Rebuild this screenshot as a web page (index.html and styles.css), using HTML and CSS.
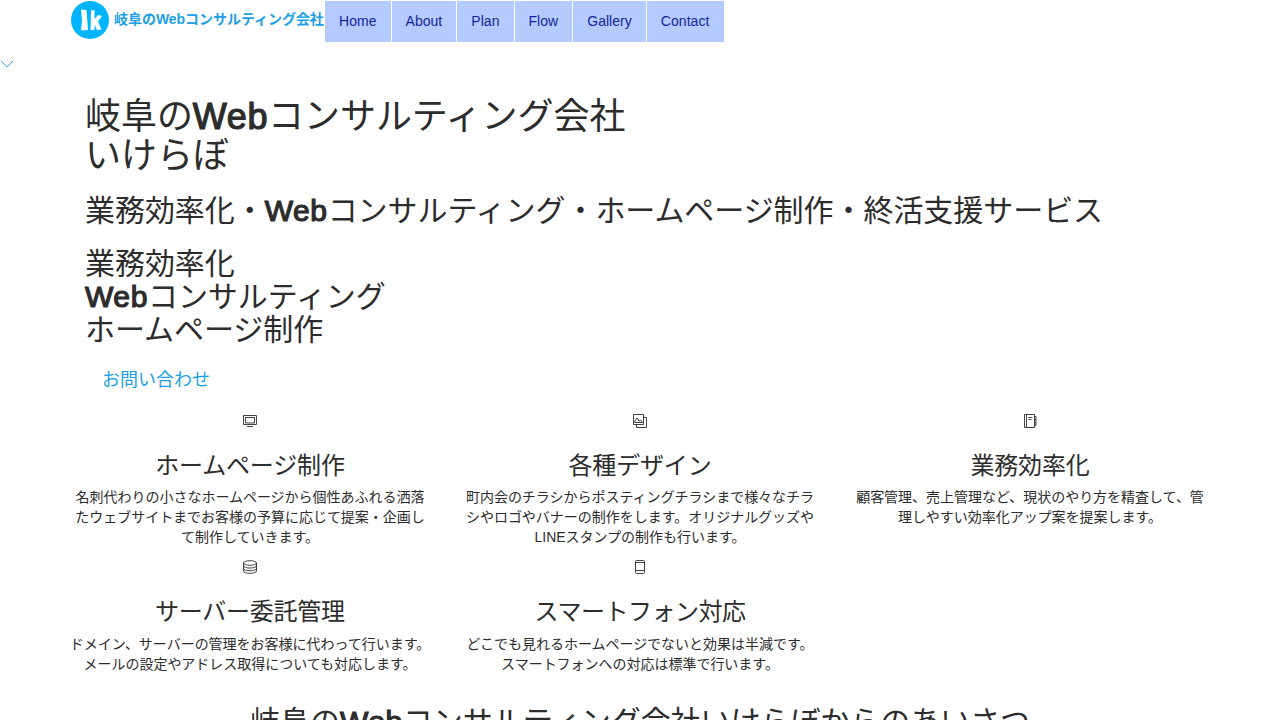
FILE: index.html
```html
<!DOCTYPE html>
<html lang="ja">
<head>
<meta charset="utf-8">
<title>いけらぼ</title>
<link rel="stylesheet" href="styles.css">
</head>
<body>
<header class="header">
  <a class="brand">
    <svg class="logo" viewBox="0 0 38 38"><circle cx="19" cy="19" r="19" fill="#00b4ff"/><path d="M10 8.500l5.500.5 1.500 20-7 .5 1-10zM20 9.500l3.500-.5v9l3.500-4 4 1-4 5.500 3.500 8-4.500.5-2.500-5.500V29h-4z" fill="#fff"/></svg>
    <span class="brand-name">岐阜のWebコンサルティング会社</span>
  </a>
  <nav class="nav"><a>Home</a><a>About</a><a>Plan</a><a>Flow</a><a>Gallery</a><a>Contact</a></nav>
</header>
<div class="scroll-hint"><svg class="icon" viewBox="0 0 14 14"><path d="M1 4l6 6 6-6"/></svg></div>
<main>
  <section class="hero">
    <h1>岐阜の<b>Web</b>コンサルティング会社<br>いけらぼ</h1>
    <h2>業務効率化・<b>Web</b>コンサルティング・ホームページ制作・終活支援サービス</h2>
    <h2>業務効率化<br><b>Web</b>コンサルティング<br>ホームページ制作</h2>
    <a class="contact">お問い合わせ</a>
  </section>
  <section class="services">
    <article><svg class="icon" viewBox="0 0 14 14"><path d="M.5 1.500h13v9H.5zM2.500 3.500h9v5.500h-9zM4 12.500h6"/></svg><h3>ホームページ制作</h3><p>名刺代わりの小さなホームページから個性あふれる洒落<br>たウェブサイトまでお客様の予算に応じて提案・企画し<br>て制作していきます。</p></article>
    <article><svg class="icon" viewBox="0 0 14 14"><path d="M.5.5h10v10H.5zM10.500 3.500h3v10h-10v-3M1.500 8.500h8l-2-2.500-1.500 1L4 4 1.500 8"/></svg><h3>各種デザイン</h3><p>町内会のチラシからポスティングチラシまで様々なチラ<br>シやロゴやバナーの制作をします。オリジナルグッズや<br>LINEスタンプの制作も行います。</p></article>
    <article><svg class="icon" viewBox="0 0 14 14"><path d="M1.500.5h10v13h-10zM3.500 1v12M5.500 3.500h4M5.500 5.500h3M11.500 2.500h1.500v9h-1.500M11.500 5.500H13M11.500 8.500H13"/></svg><h3>業務効率化</h3><p>顧客管理、売上管理など、現状のやり方を精査して、管<br>理しやすい効率化アップ案を提案します。</p></article>
    <article><svg class="icon" viewBox="0 0 14 14"><ellipse cx="7" cy="3" rx="6.500" ry="2.300"/><path d="M.5 3v8c0 3.100 13 3.100 13 0V3M.5 5.700c0 3.100 13 3.100 13 0M.5 8.400c0 3.100 13 3.100 13 0"/></svg><h3 class="kana-wide">サーバー委託管理</h3><p class="lower">ドメイン、サーバーの管理をお客様に代わって行います。<br>メールの設定やアドレス取得についても対応します。</p></article>
    <article><svg class="icon" viewBox="0 0 14 14"><rect x="2.500" y=".5" width="9" height="13" rx="1"/><path d="M2.500 2.500h9M2.500 10.500h9"/></svg><h3 class="kana-long">スマートフォン対応</h3><p class="lower">どこでも見れるホームページでないと効果は半減です。<br>スマートフォンへの対応は標準で行います。</p></article>
  </section>
  <h2 class="greeting">岐阜の<b>Web</b>コンサルティング会社いけらぼからのあいさつ</h2>
</main>
</body>
</html>
```
FILE: styles.css
```css
* { box-sizing: border-box; }
body { margin: 0; height: 720px; overflow: hidden; background: #fff; color: #2c2c2c; font: 14px/20px "Liberation Sans", "Noto Sans CJK JP", sans-serif; }
.header { display: flex; height: 42px; padding-left: 71px; }
.brand { display: flex; width: 254px; color: #1ba0e6; font-weight: bold; white-space: nowrap; }
.logo { width: 38px; height: 38px; margin: 1px 5px 0 0; }
.brand-name { padding-top: 9px; letter-spacing: -.04px; }
.nav { display: flex; }
.nav a { height: 42px; padding: 0 14px; border: solid #fff; border-width: 1px 1px 0 0; background: #b5cbff; color: #14259a; line-height: 40px; letter-spacing: .04px; }
.nav a:last-child { padding-right: 15px; }
.scroll-hint { height: 44px; padding-top: 15px; color: #1ba0e6; }
.icon { display: block; width: 14px; height: 14px; fill: none; stroke: currentColor; stroke-width: .9; }
.hero { padding: 11px 85px 0; white-space: nowrap; }
h1, h2, h3, p { margin: 0; font-weight: 400; }
h1 { font-size: 36px; line-height: 39px; letter-spacing: -.05px; }
h2 { margin-top: 19px; font-size: 30px; line-height: 33px; letter-spacing: -.05px; }
h2 + h2 { margin-top: 20px; }
h1 b, h2 b { font-weight: 400; letter-spacing: .6px; -webkit-text-stroke: 1.2px currentColor; }
.contact { display: block; height: 46px; margin: 22px 0 0 17px; color: #1ba0e6; font-size: 18px; line-height: 25px; }
.services { display: grid; grid-template-columns: repeat(3, 390px); margin-left: 55px; text-align: center; white-space: nowrap; }
.services article { height: 146px; }
.services .icon { margin: 0 auto; }
h3 { margin: 25px 0 8px; font-size: 24px; line-height: 26px; letter-spacing: -.15px; }
.kana-wide { letter-spacing: -.25px; }
.kana-long { letter-spacing: -.5px; }
.services p { font-size: 14px; letter-spacing: -.02px; }
.services .lower { padding-top: 1px; }
.greeting { margin-top: -1px; text-align: center; }
```
